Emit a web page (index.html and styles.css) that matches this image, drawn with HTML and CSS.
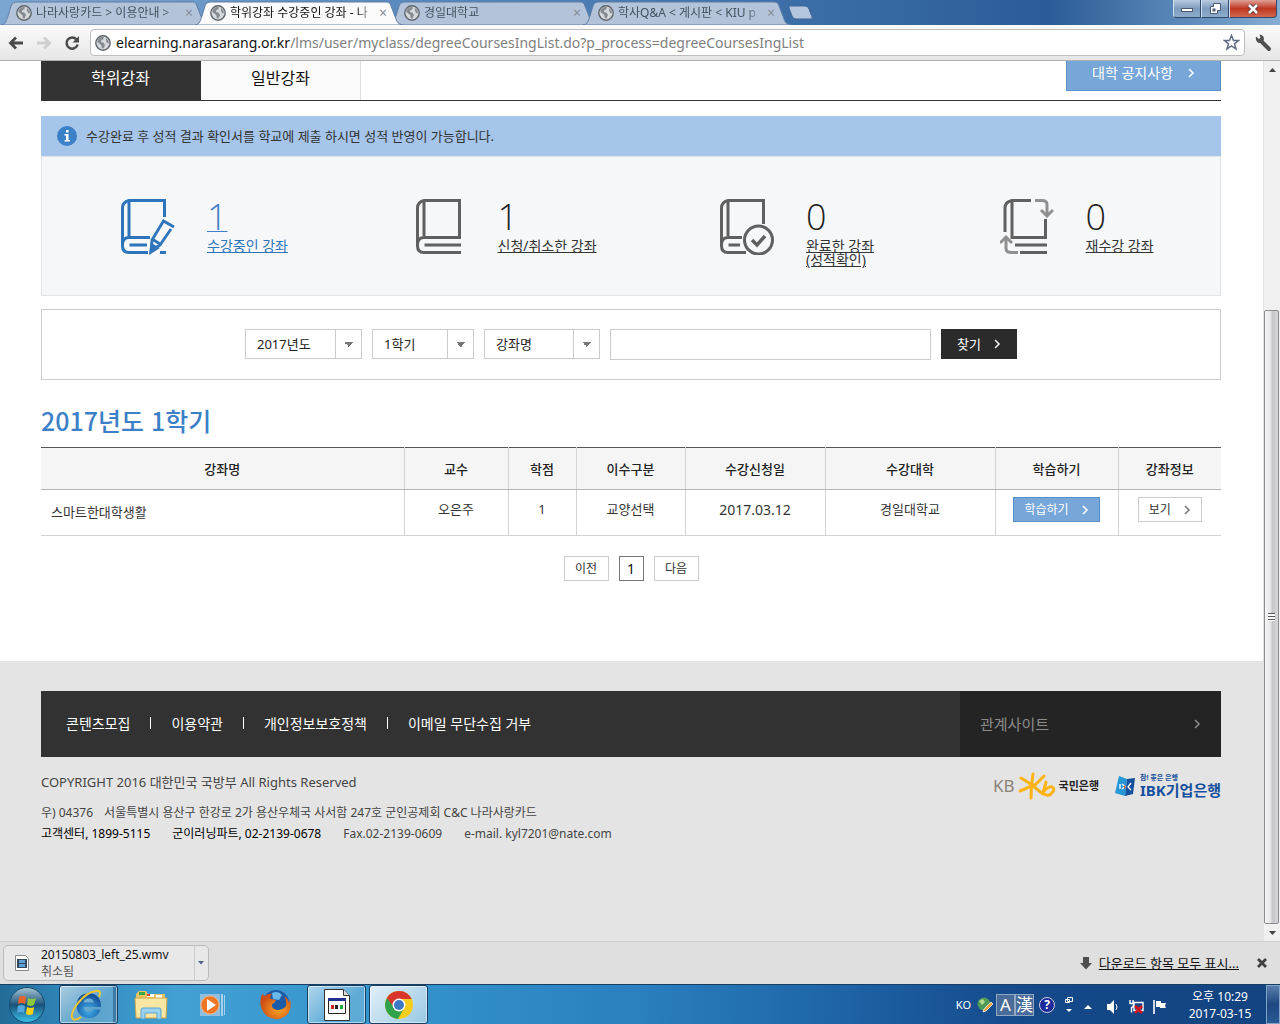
FILE: index.html
```html
<!DOCTYPE html>
<html lang="ko">
<head>
<meta charset="utf-8">
<meta name="viewport" content="width=device-width, initial-scale=1">
<title>학위강좌 수강중인 강좌</title>
<link rel="stylesheet" href="styles.css">
</head>
<body>
<svg class="defs" aria-hidden="true">
  <defs>
    <symbol id="globe" viewBox="0 0 16 16">
      <circle cx="8" cy="8" r="7.2" fill="#d6d9dc" stroke="#5f656b" stroke-width="1.4"/>
      <path d="M3 4.5L6 2l3 .3-.6 1.9-2 .8-.4 2 2.600.8L10 10l-1.500 3.500-1.800-.5-.4-3L3.500 8 2.200 6.500zM11 3l2.500 2.500.4 3-1.800-.6L10.800 5z" fill="#858b91"/>
    </symbol>
    <symbol id="tab-shape" viewBox="0 0 208 24" preserveAspectRatio="none">
      <path d="M0 24C5 23 5 20 7 15L10 5C11 2 13 1 16 1H190C194 1 195 2 196 5L201 18C202 21 203 23 208 24Z"/>
    </symbol>
    <symbol id="chevron" viewBox="0 0 8 10">
      <path d="M2 1l4 4-4 4" fill="none" stroke="currentColor" stroke-width="1.500"/>
    </symbol>
    <linearGradient id="orb" x1="0" y1="0" x2="0" y2="1">
      <stop offset="0" stop-color="#a9c6d6"/><stop offset=".5" stop-color="#1b5279"/><stop offset="1" stop-color="#3bc5ee"/>
    </linearGradient>
    <radialGradient id="ie" cx=".5" cy=".7" r=".7">
      <stop offset="0" stop-color="#3fb0ea"/><stop offset="1" stop-color="#0f4590"/>
    </radialGradient>
    <radialGradient id="fox" cx=".6" cy=".6" r=".6">
      <stop offset="0" stop-color="#f9a825"/><stop offset="1" stop-color="#cf4d14"/>
    </radialGradient>
  </defs>
</svg>

<header class="titlebar">
  <nav class="tabs" aria-label="탭">
    <div class="tab">
      <svg class="tab-bg"><use href="#tab-shape"/></svg>
      <svg class="fav"><use href="#globe"/></svg>
      <span class="tab-title">나라사랑카드 &gt; 이용안내 &gt;</span>
      <button class="tab-close" aria-label="탭 닫기">×</button>
    </div>
    <div class="tab active">
      <svg class="tab-bg"><use href="#tab-shape"/></svg>
      <svg class="fav"><use href="#globe"/></svg>
      <span class="tab-title">학위강좌 수강중인 강좌 - 나</span>
      <button class="tab-close" aria-label="탭 닫기">×</button>
    </div>
    <div class="tab">
      <svg class="tab-bg"><use href="#tab-shape"/></svg>
      <svg class="fav"><use href="#globe"/></svg>
      <span class="tab-title">경일대학교</span>
      <button class="tab-close" aria-label="탭 닫기">×</button>
    </div>
    <div class="tab">
      <svg class="tab-bg"><use href="#tab-shape"/></svg>
      <svg class="fav"><use href="#globe"/></svg>
      <span class="tab-title">학사Q&amp;A &lt; 게시판 &lt; KIU p</span>
      <button class="tab-close" aria-label="탭 닫기">×</button>
    </div>
    <button class="new-tab" aria-label="새 탭"><svg width="26" height="16" viewBox="0 0 26 16"><path d="M1 1h16q3 0 4 3l3 8q1 2-1 2H8q-3 0-4-3L1 3z" fill="#b4c6de" stroke="#44699a"/></svg></button>
  </nav>
  <div class="window-buttons">
    <button aria-label="최소화"><svg width="14" height="12"><rect x="1.500" y="5.500" width="11" height="3" fill="#fff" stroke="#4b5a70"/></svg></button>
    <button aria-label="이전 크기로"><svg width="14" height="14"><path d="M5.500 1.500h7v7h-3v3h-7v-7h3z" fill="#fff" stroke="#4b5a70"/><rect x="5" y="7" width="2" height="2" fill="#5d7fa8" stroke="#4b5a70"/></svg></button>
    <button class="close" aria-label="닫기"><svg width="14" height="12"><path d="M3 2l8 8M11 2l-8 8" stroke="#5b3338" stroke-width="4.500"/><path d="M3 2l8 8M11 2l-8 8" stroke="#fff" stroke-width="2.600"/></svg></button>
  </div>
</header>

<div class="toolbar">
  <button class="tool" aria-label="뒤로"><svg width="16" height="14"><path d="M15 7H3M8 1.500L2.500 7 8 12.500" fill="none" stroke="#4a4a4a" stroke-width="2.800"/></svg></button>
  <button class="tool" aria-label="앞으로"><svg width="16" height="14"><path d="M1 7h12M8 1.500L13.500 7 8 12.500" fill="none" stroke="#cfcfcf" stroke-width="2.800"/></svg></button>
  <button class="tool" aria-label="새로고침"><svg width="16" height="16"><path d="M12.500 4.500A5.600 5.600 0 1 0 13.600 9.500" fill="none" stroke="#4a4a4a" stroke-width="2.500"/><path d="M15 1v6.500H8.500z" fill="#4a4a4a"/></svg></button>
  <div class="omnibox">
    <svg class="fav"><use href="#globe"/></svg>
    <p class="url"><b>elearning.narasarang.or.kr</b>/lms/user/myclass/degreeCoursesIngList.do?p_process=degreeCoursesIngList</p>
    <svg width="17" height="17" viewBox="0 0 17 17"><path d="M8.500 1.500l2 5h5l-4 3.300 1.500 5.200-4.500-3-4.500 3 1.500-5.200-4-3.300h5z" fill="#fff" stroke="#626b85" stroke-width="1.500"/></svg>
  </div>
  <button class="tool" aria-label="설정"><svg width="18" height="18" viewBox="0 0 18 18"><path d="M6.500 6.500l8.500 8.500" stroke="#505050" stroke-width="4" stroke-linecap="round"/><path d="M2 2.500l3 2.500 1.500-1L5.500.8C8.500.5 10.500 3 9.800 6L7 9C4 9.700 1 7 2 2.500z" fill="#505050"/></svg></button>
</div>

<div class="viewport">
  <div class="page">
    <main class="wrap">
      <div class="course-tabs">
        <a class="course-tab on" href="#">학위강좌</a>
        <a class="course-tab" href="#">일반강좌</a>
        <a class="btn-notice" href="#">대학 공지사항 <svg class="chev"><use href="#chevron"/></svg></a>
      </div>

      <p class="notice"><svg width="20" height="20"><circle cx="10" cy="10" r="10" fill="#3c80c8"/><path d="M9 4h2.500v2.500H9zM7.500 8h4v6H13v1.500H7.500V14H9V9.500H7.500z" fill="#fff"/></svg>수강완료 후 성적 결과 확인서를 학교에 제출 하시면 성적 반영이 가능합니다.</p>

      <section class="stats">
        <a class="stat current" href="#">
          <svg width="54" height="56" viewBox="0 0 54 56" fill="none" stroke="currentColor" stroke-width="3">
            <path d="M43.500 18V1.500H8Q1.500 3 1.500 9V47Q1.500 53.500 8 53.500H27M8 2V37.500M1.500 45Q2 38.500 8 38.500H29M26 46H8.500M39 53.500h6"/>
            <path d="M53 28L42.500 22 31 41 30 52 39 46 50 30M31 40l8 5" stroke-width="2.800"/>
            <path d="M30 53l1-7 5 3z" fill="currentColor"/>
          </svg>
          <span class="stat-text"><strong>1</strong><span>수강중인 강좌</span></span>
        </a>
        <a class="stat" href="#">
          <svg width="50" height="56" viewBox="0 0 50 56" fill="none" stroke="#606060" stroke-width="3">
            <path d="M8 38.500H43.500V1.500H8Q1.500 3 1.500 9V47Q1.500 53.500 8 53.500H45M8 2V37M1.500 45Q2 38.500 8 38.500M45 46H8.500"/>
          </svg>
          <span class="stat-text"><strong>1</strong><span>신청/취소한 강좌</span></span>
        </a>
        <a class="stat" href="#">
          <svg width="54" height="56" viewBox="0 0 54 56" fill="none" stroke="#606060" stroke-width="3">
            <path d="M43.500 25V1.500H8Q1.500 3 1.500 9V47Q1.500 53.500 8 53.500H26M8 2V37M1.500 45Q2 38.500 8 38.500H22M20 46H8.500"/>
            <circle cx="38.500" cy="41" r="14"/><path d="M32 41l5 5 8-9" stroke-width="3.500"/>
          </svg>
          <span class="stat-text"><strong>0</strong><span>완료한 강좌<br>(성적확인)</span></span>
        </a>
        <a class="stat" href="#">
          <svg width="54" height="56" viewBox="0 0 54 56" fill="none" stroke="#606060" stroke-width="3">
            <path d="M31 1.500H12Q5 3 5 9V33M12 2V38.500H45.500V20M15 46H47M20 53.500H47"/>
            <path d="M35 1.500h7q5 0 5 4V16M41 11l6 6 6-6M18 53.500H12q-6 0-6-4V38M0 44l6-6 6 6" stroke="#909090"/>
          </svg>
          <span class="stat-text"><strong>0</strong><span>재수강 강좌</span></span>
        </a>
      </section>

      <form class="search">
        <select class="year" aria-label="년도"><option>2017년도</option></select>
        <select class="term" aria-label="학기"><option>1학기</option></select>
        <select class="field" aria-label="검색 구분"><option>강좌명</option></select>
        <input type="text" aria-label="검색어">
        <button type="button">찾기 <svg class="chev"><use href="#chevron"/></svg></button>
      </form>

      <h1>2017년도 1학기</h1>

      <table class="courses">
        <colgroup><col><col class="c-prof"><col class="c-credit"><col class="c-type"><col class="c-date"><col class="c-univ"><col class="c-study"><col class="c-info"></colgroup>
        <thead>
          <tr><th>강좌명</th><th>교수</th><th>학점</th><th>이수구분</th><th>수강신청일</th><th>수강대학</th><th>학습하기</th><th>강좌정보</th></tr>
        </thead>
        <tbody>
          <tr>
            <td class="name">스마트한대학생활</td><td>오은주</td><td>1</td><td>교양선택</td><td class="date">2017.03.12</td><td>경일대학교</td>
            <td><a class="btn-small study" href="#">학습하기 <svg class="chev"><use href="#chevron"/></svg></a></td>
            <td><a class="btn-small" href="#">보기 <svg class="chev"><use href="#chevron"/></svg></a></td>
          </tr>
        </tbody>
      </table>

      <nav class="paging" aria-label="페이지">
        <a href="#">이전</a><a class="now" href="#">1</a><a href="#">다음</a>
      </nav>
    </main>

    <footer class="footer">
      <div class="footer-bar">
        <ul>
          <li><a href="#">콘텐츠모집</a></li><li><a href="#">이용약관</a></li><li><a href="#">개인정보보호정책</a></li><li><a href="#">이메일 무단수집 거부</a></li>
        </ul>
        <button class="related">관계사이트 <svg class="chev"><use href="#chevron"/></svg></button>
      </div>
      <div class="footer-body">
        <address>
          <p class="copy">COPYRIGHT 2016 대한민국 국방부 All Rights Reserved</p>
          <p class="line"><span>우) 04376</span><span>서울특별시 용산구 한강로 2가 용산우체국 사서함 247호 군인공제회 C&amp;C 나라사랑카드</span></p>
          <p class="line contact"><b>고객센터, 1899-5115</b><b>군이러닝파트, 02-2139-0678</b><span>Fax.02-2139-0609</span><span>e-mail. kyl7201@nate.com</span></p>
        </address>
        <div class="banks">
          <a class="kb" href="#"><span class="kb-en">KB</span><svg width="38" height="28" viewBox="0 0 38 28" fill="none" stroke="#fbb315" stroke-width="3" stroke-linecap="round"><path d="M15 2Q13 13 13 26M3 6L16 14 26 4M16 13L2 19M15 14L25 22M28 10L25 21Q29 25 33 22 38 17 34 15 31 14 26 19"/></svg><span>국민은행</span></a>
          <a class="ibk" href="#"><svg width="22" height="22" viewBox="0 0 22 22"><path d="M5 1l8 3-2 17-10-3z" fill="#2597d6"/><path d="M13 4l8-1-2 16-8 2z" fill="#15509c"/><path d="M6 9v5M8 9l3 2.500L8 14M17 8l-3 4 3 3" stroke="#fff" stroke-width="1.300" fill="none"/><path d="M10 10l2 2-2 2z" fill="#e6562d"/></svg><span class="ibk-text"><small>참! 좋은 은행</small><span>IBK기업은행</span></span></a>
        </div>
      </div>
    </footer>
  </div>

  <div class="scrollbar" aria-hidden="true">
    <svg width="17" height="17"><path d="M5 11l3.500-4L12 11z" fill="#444"/></svg>
    <div class="track"><div class="thumb"><i></i></div></div>
    <svg width="17" height="17"><path d="M5 7h7l-3.500 4z" fill="#444"/></svg>
  </div>
</div>

<div class="downloads">
  <div class="download">
    <svg width="14" height="16"><path d="M.5.500h10l3 3v12H.5z" fill="#fff" stroke="#888"/><path d="M2 4h10v9H2z" fill="#33475f"/><path d="M4 5h6v3H4zM4 9h6v3H4z" fill="#5fa0d8"/></svg>
    <p>20150803_left_25.wmv<br><span>취소됨</span></p>
    <button aria-label="메뉴"><svg width="7" height="4"><path d="M0 0h6L3 3.500z" fill="#4d6380"/></svg></button>
  </div>
  <svg class="down" width="12" height="13"><path d="M3 0h6v6h3l-6 6.500L0 6h3z" fill="#4f4f4f"/></svg>
  <a class="show-all" href="#">다운로드 항목 모두 표시...</a>
  <button class="bar-close" aria-label="닫기"><svg width="10" height="10"><path d="M1 1l8 8M9 1L1 9" stroke="#404040" stroke-width="2.800"/></svg></button>
</div>

<div class="taskbar">
  <button class="start" aria-label="시작"><svg width="38" height="38" viewBox="0 0 38 38"><circle cx="19" cy="19" r="17.500" fill="url(#orb)" stroke="#174a6c"/><path d="M11 11q4-2 7 0l-1 7q-4-2-7 0z" fill="#e9642b"/><path d="M20 12q4 2 8 0l-2 7q-3 2-7 0z" fill="#8dc63f"/><path d="M10 20q3-2 7 0l-1 7q-4-2-7 0z" fill="#4fa8e0"/><path d="M19 21q4 2 7 0l-1 7q-4 2-7 0z" fill="#fcd116"/></svg></button>
  <button class="app open stacked" aria-label="Internet Explorer"><svg width="34" height="34" viewBox="0 0 34 34"><path fill-rule="evenodd" d="M31 19H13.500q.5 5 5.500 5 3 0 4.500-2.500H30.500Q28 30 19 30 7 29 6.500 17.500 7 6 19 5 31 6 31 19zM13.500 14.500h10.500q-.8-4-5.200-4-4.500 0-5.300 4z" fill="url(#ie)"/><path d="M29 9q3-7-3-6Q17 4 8 15-1 27 3 31q3 2 8-2" fill="none" stroke="#f4c430" stroke-width="2"/></svg></button>
  <button class="app" aria-label="탐색기"><svg width="34" height="32" viewBox="0 0 34 32"><path d="M2 5l3-3h7l2 3h17v24H2z" fill="#e7c565"/><path d="M5 3h6v3H5z" fill="#3da642"/><path d="M13 5h7v3h-7zM22 6h6v3h-6z" fill="#fff"/><path d="M13 5h3v2h-3z" fill="#d9432f"/><path d="M1 9h32l-1 20H2z" fill="#f8e7a2" stroke="#cfa646"/><path d="M7 30v-9q0-2 2-2h16q2 0 2 2v9h-4v-6H11v6z" fill="#9bd3ee" stroke="#5aa4cf"/></svg></button>
  <button class="app" aria-label="Media Player"><svg width="28" height="28" viewBox="0 0 28 28"><path d="M22 3h2v22h-2zM25 4h1v20h-1z" fill="#a6d1ec"/><path d="M1 3h20v22H1z" fill="#8fbfe0"/><circle cx="11" cy="14" r="9" fill="#ee7623" stroke="#f6b27c"/><path d="M8 8l9 6-9 6z" fill="#fff"/></svg></button>
  <button class="app" aria-label="Firefox"><svg width="34" height="34" viewBox="0 0 34 34"><circle cx="18" cy="15" r="13" fill="#1c5ba8"/><path d="M14 5q6-3 10 2l-3 5-6-1z" fill="#6bb8ea"/><path d="M4 6l3 2q3-3 7-2-3 3-1 5l5 1q-1 3-4 4-1 5 5 6 6 0 9-4 1-6-2-10 5 3 5 8l1-5q3 12-6 18-9 5-17-1Q-1 19 4 6z" fill="url(#fox)"/></svg></button>
  <button class="app open" aria-label="문서"><svg width="28" height="34" viewBox="0 0 28 34"><path d="M1.500 1.500h19l6 6v25h-25z" fill="#fff" stroke="#333"/><path d="M20.500 1.500v6h6" fill="#ddd" stroke="#333"/><path d="M5.500 10.500h17v15h-17z" fill="#fff" stroke="#222"/><path d="M5 10h18v3H5z" fill="#20308f"/><path d="M8 17h3v4H8z" fill="#c22"/><path d="M12 17h3v4h-3z" fill="#222"/><path d="M17 17h3v4h-3z" fill="#2a3"/></svg></button>
  <button class="app open focused" aria-label="Chrome"><svg width="30" height="30" viewBox="0 0 30 30"><circle cx="15" cy="15" r="14" fill="#f8cd1d"/><path d="M15 15L2.900 8A14 14 0 0 0 14 29l6-11z" fill="#2fa24b"/><path d="M2.900 8A14 14 0 0 1 27.600 9H15l-6 7z" fill="#d9362b"/><circle cx="15" cy="15" r="6.500" fill="#fff"/><circle cx="15" cy="15" r="5" fill="#3c78c4"/></svg></button>

  <div class="tray">
    <span class="lang">KO</span>
    <svg width="16" height="16" viewBox="0 0 16 16"><circle cx="7" cy="7" r="6.500" fill="#4d9a5a"/><path d="M2 4l4-2 2 3-3 3z" fill="#b5d88a"/><path d="M14 5l2 2-7 7-3 1 1-3z" fill="#f2a13c" stroke="#fff" stroke-width=".7"/></svg>
    <span class="ime"><button>A</button><button>漢</button></span>
    <button class="help" aria-label="도움말">?</button>
    <svg width="10" height="18"><path d="M3.500 1.500h5v4h-5zM1.500 3.500h4v3h-4z" fill="#1b4f8c" stroke="#fff"/><path d="M2 13h6l-3 3z" fill="#fff"/></svg>
    <svg class="up" width="8" height="4"><path d="M0 4h8L4 0z" fill="#fff"/></svg>
    <svg class="low" width="14" height="16"><path d="M1 5h3l4-4v14l-4-4H1z" fill="#fff"/><path d="M10 5q2 3 0 6" stroke="#fff" fill="none"/></svg>
    <svg class="low" width="16" height="16"><path d="M2 1v4M5 1v4M1.500 4.500h4v3l-2 1v5M6 3.500h9v8H6z" fill="none" stroke="#fff" stroke-width="1.400"/><path d="M7 7l7 7M14 7l-7 7" stroke="#d7141b" stroke-width="2.600"/></svg>
    <svg class="low" width="16" height="16"><path d="M2 1v14" stroke="#fff" stroke-width="1.600"/><path d="M4 2h5v2h5l-1 3 1 2H8V8H4z" fill="#fff"/></svg>
    <time>오후 10:29<br>2017-03-15</time>
    <button class="desktop" aria-label="바탕 화면 보기"></button>
  </div>
</div>
</body>
</html>
```
FILE: styles.css
```css
* { box-sizing: border-box; margin: 0; padding: 0; }

body {
  display: flex;
  flex-direction: column;
  min-height: 100vh;
  background: #fff;
  color: #333;
  font: 13px/20px "Noto Sans", "Noto Sans CJK KR", sans-serif;
}

a { color: inherit; text-decoration: none; }
button { border: 0; background: none; color: inherit; font: inherit; }
svg { display: block; flex: none; }
.defs { position: absolute; width: 0; height: 0; }
.chev { width: 8px; height: 10px; }
.fav { width: 16px; height: 16px; }

/* browser tabs */
.titlebar {
  display: flex;
  justify-content: space-between;
  height: 25px;
  background: linear-gradient(90deg, #7ba6d2 0, #3d70a8 60%, #2c5c97 82%, #6794c2 95%, #86aed3 100%);
}
.tabs { display: flex; align-items: flex-end; padding-left: 1px; }
.tab {
  position: relative;
  display: flex;
  align-items: center;
  width: 208px;
  height: 24px;
  margin-right: -14px;
  padding: 0 12px 0 15px;
  color: #44525f;
}
.tab .fav { position: relative; margin-right: 4px; }
.tab-bg {
  position: absolute;
  inset: 0;
  width: 100%;
  height: 24px;
  fill: #b3c4da;
  stroke: #5f7fa8;
}
.tab.active { z-index: 1; color: #111; }
.tab.active .tab-bg { fill: #fbfbfb; }
.tab-title {
  position: relative;
  flex: 1;
  overflow: hidden;
  white-space: nowrap;
  font-size: 12px;
  -webkit-mask-image: linear-gradient(90deg, #000 88%, transparent);
  mask-image: linear-gradient(90deg, #000 88%, transparent);
}
.tab-close { position: relative; width: 16px; font-size: 14px; color: #858e99; }
.new-tab { margin: 0 0 4px 11px; }
.window-buttons { display: flex; height: 18px; margin-right: 3px; }
.window-buttons button {
  display: flex;
  align-items: center;
  justify-content: center;
  width: 28px;
  border: 1px solid #31496b;
  border-top: 0;
  border-left-color: #cfe0f0;
  background: linear-gradient(#b9cbdf, #7d9bbd 50%, #8dabc9);
}
.window-buttons button:first-child { border-radius: 0 0 0 4px; }
.window-buttons .close {
  width: 48px;
  border-radius: 0 0 4px 0;
  background: linear-gradient(#e0a196, #bf3722 50%, #d4674e);
}

/* address bar */
.toolbar {
  display: flex;
  align-items: center;
  gap: 12px;
  height: 36px;
  padding: 0 8px;
  border-bottom: 1px solid #b0b0b0;
  background: linear-gradient(#fbfbfb, #e6e6e6);
}
.tool { display: flex; align-items: center; }
.omnibox {
  display: flex;
  flex: 1;
  align-items: center;
  min-width: 0;
  height: 27px;
  margin: 0 -3px 0 -2px;
  padding: 0 4px;
  border: 1px solid #bdbdbd;
  border-radius: 4px;
  background: #fff;
}
.url {
  flex: 1;
  overflow: hidden;
  margin-left: 5px;
  white-space: nowrap;
  color: #808080;
  font-size: 14px;
}
.url b { color: #111; font-weight: 400; }

/* visible part of the page */
.viewport { display: flex; flex: 1; }
.page { display: flex; flex: 1; flex-direction: column; min-width: 0; }
.wrap { padding: 0 42px 80px 41px; }

.course-tabs { display: flex; height: 40px; border-bottom: 1px solid #333; }
.course-tab {
  width: 160px;
  border-right: 1px solid #ddd;
  background: #fafafa;
  color: #111;
  font-size: 16px;
  line-height: 34px;
  text-align: center;
}
.course-tab.on { border-color: #333; background: #333; color: #fff; }
.btn-notice {
  display: flex;
  align-items: center;
  justify-content: center;
  gap: 14px;
  width: 155px;
  height: 30px;
  margin-left: auto;
  padding-bottom: 6px;
  border: 1px solid #5a8fcb;
  border-top: 0;
  background: #77a6d9;
  color: #fff;
  font-size: 14px;
}

.notice {
  display: flex;
  align-items: center;
  gap: 9px;
  height: 40px;
  margin-top: 15px;
  padding-left: 16px;
  background: #a5c5ea;
}
.stats {
  display: grid;
  grid-template-columns: 295fr 305fr 280fr 300fr;
  height: 140px;
  border: 1px solid #e2e4e8;
  background: #f6f7f9;
}
.stat { display: flex; gap: 32px; padding: 42px 0 0 79px; }
.stat-text { display: flex; flex-direction: column; align-items: flex-start; white-space: nowrap; }
.stat-text span { font-size: 14px; line-height: 14px; text-decoration: underline; }
.stat strong {
  margin-bottom: 4px;
  color: #222;
  font: 300 36px/36px "Open Sans", "Noto Sans CJK KR", sans-serif;
}
.stat.current { color: #2e74bb; }
.stat.current strong { color: #3f80c8; text-decoration: underline; text-decoration-thickness: 1px; }

.search {
  display: flex;
  justify-content: center;
  gap: 10px;
  margin-top: 13px;
  padding: 19px;
  border: 1px solid #ccc;
}
.search select,
.search input { height: 31px; border: 1px solid #ccc; border-radius: 0; background: #fff; color: #222; font: inherit; }
.search select {
  height: 30px;
  padding: 0 11px;
  appearance: none;
  background-image: linear-gradient(#ccc, #ccc), linear-gradient(to bottom left, #777 50%, transparent 50%), linear-gradient(to bottom right, #777 50%, transparent 50%);
  background-position: right 25px top, right 12px center, right 7px center;
  background-size: 1px 100%, 5px 5px, 5px 5px;
  background-repeat: no-repeat;
}
.search .year { width: 117px; }
.search .term { width: 102px; }
.search .field { width: 116px; }
.search input { width: 321px; padding: 0 8px; }
.search button {
  display: flex;
  align-items: center;
  justify-content: center;
  gap: 12px;
  width: 76px;
  height: 30px;
  background: #2b2b2b;
  color: #fff;
}

h1 {
  margin: 23px 0 10px;
  color: #3c80c8;
  font: 500 25px/34px "Noto Sans CJK KR", sans-serif;
}

.courses {
  width: 100%;
  table-layout: fixed;
  border-collapse: collapse;
  border-top: 1px solid #555;
  text-align: center;
}
.c-prof { width: 104px; }
.c-credit { width: 68px; }
.c-type { width: 109px; }
.c-date { width: 140px; }
.c-univ { width: 170px; }
.c-study { width: 123px; }
.c-info { width: 103px; }
.courses th { height: 42px; border-bottom: 1px solid #b5b5b5; background: #f5f5f5; color: #222; font-weight: 500; }
.courses td { height: 46px; padding-top: 7px; border-bottom: 1px solid #d3d3d3; line-height: 25px; vertical-align: top; }
.courses th + th,
.courses td + td { border-left: 1px solid #d3d3d3; }
.courses .name { padding: 0 10px; text-align: left; vertical-align: middle; }
.courses .date { font-size: 14px; }
.btn-small {
  display: inline-flex;
  align-items: center;
  gap: 12px;
  height: 25px;
  padding: 0 10px;
  border: 1px solid #ccc;
  font-size: 12px;
  vertical-align: top;
}
.btn-small .chev { color: #777; }
.btn-small.study { border-color: #5a8fcb; background: #77a6d9; color: #fff; }
.study .chev { color: #fff; }

.paging { display: flex; justify-content: center; gap: 10px; margin-top: 20px; font-size: 12px; line-height: 23px; text-align: center; }
.paging a { width: 45px; border: 1px solid #ccc; }
.paging .now { width: 25px; border-color: #777; color: #111; font-size: 14px; }

/* site footer */
.footer { flex: 1; padding: 30px 42px 20px 41px; background: #e4e4e4; }
.footer-bar { display: flex; justify-content: space-between; height: 66px; background: #323232; color: #fff; }
.footer-bar ul { display: flex; align-items: center; padding-left: 25px; list-style: none; font-size: 14px; }
.footer-bar li + li::before { content: ""; display: inline-block; width: 1px; height: 12px; margin: 0 20px; background: #fff; }
.related {
  display: flex;
  align-items: center;
  justify-content: space-between;
  width: 261px;
  padding: 0 20px;
  background: #242424;
  color: #8c8c8c;
  font-size: 15px;
}
.footer-body { display: flex; justify-content: space-between; padding-top: 15px; }
.footer address { color: #444; font-style: normal; font-size: 12px; }
.footer .copy { margin-bottom: 10px; font-size: 13px; }
.line { display: flex; gap: 11px; line-height: 21px; }
.contact { gap: 22px; }
.line b { color: #000; font-weight: 400; }
.banks { display: flex; align-items: flex-start; gap: 15px; }
.kb, .ibk { display: flex; align-items: center; height: 28px; }
.kb { gap: 3px; color: #222; font-size: 11px; font-weight: 700; }
.kb-en { color: #8a8278; font-size: 17px; font-weight: 400; }
.ibk { gap: 4px; color: #15509c; }
.ibk-text { display: flex; flex-direction: column; font-size: 15px; font-weight: 700; line-height: 16px; }
.ibk-text small { font-size: 7px; line-height: 8px; }

.scrollbar { display: flex; flex-direction: column; width: 17px; border-left: 1px solid #e3e3e3; background: #f0f0f0; }
.track { display: grid; flex: 1; grid-template-rows: 232fr 613fr; }
.thumb {
  display: grid;
  grid-row: 2;
  place-items: center;
  width: 15px;
  border: 1px solid #8c8c90;
  border-radius: 2px;
  background: linear-gradient(90deg, #f7f7f7, #e4e4e6 45%, #c6c6ca 55%, #d6d6da);
}
.thumb i { width: 7px; height: 8px; background: repeating-linear-gradient(#555 0 1px, #fff 1px 3px); }

/* download shelf */
.downloads {
  display: flex;
  align-items: center;
  height: 43px;
  padding: 0 13px 0 3px;
  border-top: 1px solid #d0d0d0;
  background: #dfdfdf;
  color: #111;
}
.download {
  display: flex;
  align-items: center;
  width: 206px;
  height: 36px;
  margin-right: auto;
  padding-left: 11px;
  border: 1px solid #bbb;
  border-radius: 5px;
  background: #e8e8e9;
}
.download p { flex: 1; margin-left: 12px; font-size: 12px; line-height: 17px; }
.download p span { color: #555; }
.download button { display: flex; align-items: center; justify-content: center; width: 14px; height: 34px; border-left: 1px solid #ccc; }
.show-all { margin: 0 18px 0 7px; text-decoration: underline; }

/* Windows taskbar */
.taskbar {
  display: flex;
  align-items: center;
  gap: 3px;
  height: 40px;
  border-top: 1px solid #173f63;
  background: linear-gradient(90deg, #226b98 0, #2f86b9 5%, #42a0d3 14%, #3392cb 32%, #2a7fbf 50%, #1d63a5 66%, #15498a 80%, #134380 100%);
}
.start { width: 56px; padding-left: 8px; }
.app { display: grid; place-items: center; width: 59px; height: 39px; }
.app.open {
  border: 1px solid #173f63;
  border-radius: 3px;
  background: linear-gradient(135deg, rgb(255 255 255 / .6), rgb(255 255 255 / .2) 60%);
  box-shadow: inset 0 0 0 1px rgb(255 255 255 / .5);
}
.app.stacked { padding-right: 4px; box-shadow: inset 0 0 0 1px rgb(255 255 255 / .5), inset -4px 0 0 #3c7ba6; }
.app.focused { background: linear-gradient(135deg, rgb(255 255 255 / .85), rgb(255 255 255 / .5)); }
.tray { display: flex; align-items: center; height: 39px; margin-left: auto; color: #fff; font-size: 12px; }
.lang { margin-right: 6px; font-size: 11px; }
.ime { display: flex; margin: 0 5px 0 3px; }
.ime button { width: 19px; height: 22px; border: 1px solid #91a8c5; background: #4a6c98; font-size: 17px; line-height: 20px; }
.help { width: 16px; height: 16px; margin-right: 9px; border: 1px solid #ccd; border-radius: 50%; background: #1c2a9c; font-weight: 700; font-size: 12px; line-height: 14px; }
.up { margin: 4px 14px 0 10px; }
.low { margin: 4px 8px 0 0; }
.tray time { width: 76px; margin: 0 8px 0 6px; line-height: 17px; text-align: center; }
.desktop { width: 14px; height: 39px; border: 1px solid #7fa3ca; background: linear-gradient(#587eab, #1d4780 50%, #2b5a94); }
```
